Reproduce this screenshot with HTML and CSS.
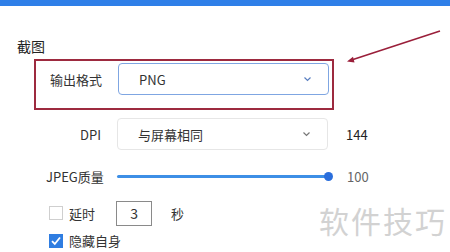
FILE: index.html
```html
<!DOCTYPE html>
<html>
<head>
    <title>截图设置</title>
    <link rel="stylesheet" href="styles.css">
</head>
<body>
    <div class="topbar"></div>
    <div class="page">
        <h3 class="section-title">截图</h3>

        <div class="format-box">
            <div class="row">
                <span class="label">输出格式</span>
                <div class="select active">
                    <span>PNG</span>
                    <svg class="chevron" width="9" height="6" viewBox="0 0 9 6"><polyline points="1.5,1.5 4.5,4.5 7.5,1.5" fill="none" stroke="#5a7fc0" stroke-width="1.2"/></svg>
                </div>
            </div>
        </div>

        <div class="row dpi-row">
            <span class="label">DPI</span>
            <div class="select">
                <span>与屏幕相同</span>
                <svg class="chevron" width="9" height="6" viewBox="0 0 9 6"><polyline points="1.5,1.5 4.5,4.5 7.5,1.5" fill="none" stroke="#777" stroke-width="1.2"/></svg>
            </div>
            <span class="value strong">144</span>
        </div>

        <div class="row slider-row">
            <span class="label">JPEG质量</span>
            <div class="slider">
                <div class="track"></div>
                <div class="thumb"></div>
            </div>
            <span class="value">100</span>
        </div>

        <div class="check-row delay-row">
            <span class="checkbox"></span>
            <span class="check-text">延时</span>
            <div class="num-input">3</div>
            <span class="unit">秒</span>
        </div>

        <div class="check-row">
            <span class="checkbox checked">
                <svg width="14" height="14" viewBox="0 0 14 14"><polyline points="3,7.2 5.8,10 11,3.5" fill="none" stroke="#fff" stroke-width="1.8"/></svg>
            </span>
            <span class="check-text">隐藏自身</span>
        </div>
    </div>

    <svg class="arrow" width="450" height="252" viewBox="0 0 450 252">
        <line x1="440" y1="31" x2="350" y2="60.5" stroke="#9a1f3a" stroke-width="1.6"/>
        <polygon points="347,61.5 353,56.8 354.5,62.4" fill="#9a1f3a"/>
    </svg>
    <div class="watermark">软件技巧</div>
</body>
</html>
```

FILE: styles.css
```css
body {
    margin: 0;
    padding: 0;
    background-color: #ffffff;
    font-family: "Noto Sans CJK SC", "Noto Sans", sans-serif;
    font-size: 13px;
    color: #333333;
    overflow: hidden;
}
.topbar {
    height: 6px;
    background-color: #2f7fe8;
}
.page {
    padding-left: 34px;
}
.section-title {
    margin: 0 0 0 -17px;
    padding-top: 30px;
    height: 23px;
    font-size: 14px;
    font-weight: normal;
    line-height: 20px;
    color: #222222;
}
.format-box {
    width: 283px;
    border: 2px solid #9d2a3f;
    padding: 2px 2px 13px 11px;
}
.row {
    display: flex;
    align-items: center;
}
.label {
    width: 55px;
    text-align: right;
    margin-right: 16px;
    white-space: nowrap;
}
.dpi-row,
.slider-row {
    padding-left: 12px;
}
.select {
    box-sizing: border-box;
    width: 211px;
    height: 32px;
    border: 1px solid #e6e6e6;
    border-radius: 4px;
    display: flex;
    align-items: center;
    justify-content: space-between;
    padding: 0 16px 0 20px;
}
.select.active {
    border-color: #7fa6e2;
}
.chevron {
    display: block;
}
.value {
    margin-left: 18px;
    color: #666666;
}
.value.strong {
    color: #222222;
}
.dpi-row {
    margin-top: 8px;
}
.slider-row {
    margin-top: 16px;
    height: 20px;
}
.slider {
    position: relative;
    width: 212px;
    height: 20px;
}
.track {
    position: absolute;
    left: 0;
    right: 0;
    top: 9px;
    height: 3px;
    border-radius: 2px;
    background-color: #3d8fe6;
}
.thumb {
    position: absolute;
    right: -4px;
    top: 6px;
    width: 9px;
    height: 9px;
    border-radius: 50%;
    background-color: #2a6edc;
}
.check-row {
    display: flex;
    align-items: center;
    padding-left: 15px;
}
.delay-row {
    margin-top: 14px;
    height: 26px;
}
.checkbox {
    box-sizing: border-box;
    width: 14px;
    height: 14px;
    border: 1px solid #cfcfcf;
    margin-right: 6px;
    display: inline-block;
}
.checkbox.checked {
    border: none;
    background-color: #2f7de1;
}
.checkbox svg {
    display: block;
}
.check-text {
    color: #333333;
}
.num-input {
    box-sizing: border-box;
    width: 36px;
    height: 25px;
    border: 1px solid #8a8a8a;
    margin-left: 21px;
    text-align: center;
    line-height: 22px;
    font-size: 14px;
}
.unit {
    margin-left: 19px;
}
.check-row + .check-row {
    margin-top: 5px;
}
.arrow {
    position: absolute;
    left: 0;
    top: 0;
    pointer-events: none;
}
.watermark {
    position: absolute;
    left: 319px;
    top: 198px;
    font-size: 30px;
    letter-spacing: 2px;
    color: #d2d2d2;
}
```
